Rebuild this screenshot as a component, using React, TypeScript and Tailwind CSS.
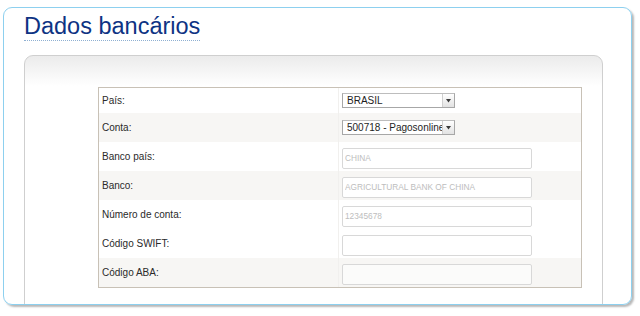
import * as React from 'react';

interface Row {
    label: string;
    kind: 'select' | 'input';
    value: string;
    shaded: boolean;
}

const rows: Row[] = [
    { label: 'País:', kind: 'select', value: 'BRASIL', shaded: false },
    { label: 'Conta:', kind: 'select', value: '500718 - Pagosonline', shaded: true },
    { label: 'Banco país:', kind: 'input', value: 'CHINA', shaded: false },
    { label: 'Banco:', kind: 'input', value: 'AGRICULTURAL BANK OF CHINA', shaded: true },
    { label: 'Número de conta:', kind: 'input', value: '12345678', shaded: false },
    { label: 'Código SWIFT:', kind: 'input', value: '', shaded: false },
    { label: 'Código ABA:', kind: 'input', value: '', shaded: true },
];

const Select = ({ value }: { value: string }) => (
    <div className="flex h-[15px] w-[113px] border border-[#a7a7a7] border-t-[#bdbdbd] bg-white">
        <div className="flex-1 overflow-hidden whitespace-nowrap pl-[4px] text-[10px] leading-[13px] text-[#1e1e1e]">
            {value}
        </div>
        <div className="flex w-[12px] items-center justify-center border-l border-[#cfcfcf] bg-[linear-gradient(to_bottom,#ffffff,#e2e2e2)]">
            <svg width="5" height="4" viewBox="0 0 5 4">
                <path d="M0 0 L5 0 L2.5 3.5 Z" fill="#3a3a3a" />
            </svg>
        </div>
    </div>
);

// last row's box sits a touch grey in the screenshot
const Field = ({ value, last }: { value: string; last: boolean }) => (
    <input
        readOnly
        value={value}
        className={
            'h-[21px] w-[190px] rounded-[2px] border border-[#d8d8d8] pl-[2px] text-[8.3px] text-[#bdbdbd] outline-none ' +
            (last ? 'bg-[#fbfbfa]' : 'bg-white')
        }
    />
);

export default function App() {
    return (
        <div className="h-[316px] w-[640px] bg-white pl-[3px] pt-[7px] font-['Liberation_Sans',Arial,sans-serif]">
            <div className="h-[298px] w-[629px] overflow-hidden rounded-[9px] border border-[#8dd0ef] pl-[20px] pt-[5px] shadow-[2px_2px_2px_rgba(0,0,0,0.28)]">
                <h1 className="inline-block border-b border-dotted border-[#8fb0d2] text-[23.5px] leading-[27px] text-[#0e3383]">
                    Dados bancários
                </h1>

                <div className="mt-[14px] h-[300px] w-[579px] rounded-t-[9px] border border-[#cfcfcf] bg-[linear-gradient(to_bottom,#ebebeb,#ffffff_30px)] pl-[73px] pt-[31px]">
                    <div className="w-[484px] border border-[#c8c1b6]">
                        {rows.map((row, i) => (
                            <div
                                key={row.label}
                                className={
                                    'flex items-center ' +
                                    (i === 0 ? 'h-[25px] ' : 'h-[29px] ') +
                                    (row.shaded ? 'bg-[#f7f6f4]' : 'bg-white')
                                }
                            >
                                <div className="flex h-full w-[240px] items-center border-r border-[#f1f0ee] pl-[3px] text-[10px] text-[#2a2a2a]">
                                    {row.label}
                                </div>
                                <div className="pl-[3px]">
                                    {row.kind === 'select' ? (
                                        <Select value={row.value} />
                                    ) : (
                                        <Field value={row.value} last={i === rows.length - 1} />
                                    )}
                                </div>
                            </div>
                        ))}
                    </div>
                </div>
            </div>
        </div>
    );
}
